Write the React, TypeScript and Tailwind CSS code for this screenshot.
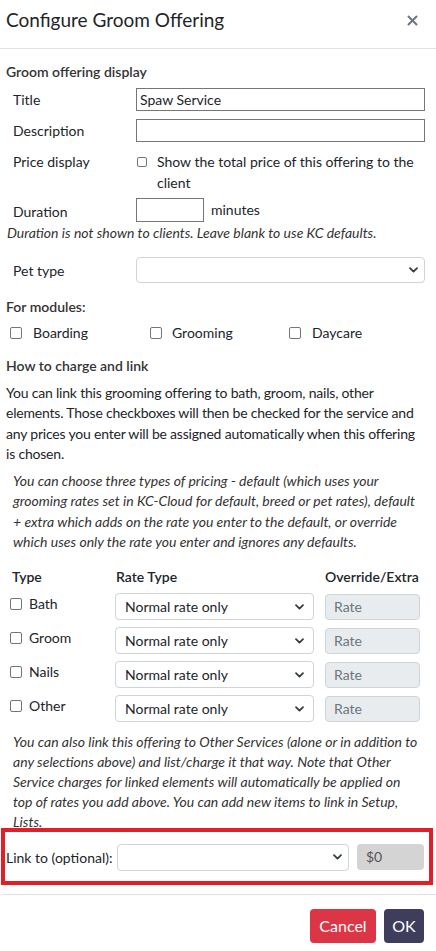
import React from "react";

function Chevron() {
  return (
    <svg width="9" height="6" viewBox="0 0 9 6" className="shrink-0">
      <path d="M1 1.2l3.5 3.5 3.5-3.5" fill="none" stroke="#343a40" strokeWidth="1.7" strokeLinecap="round" strokeLinejoin="round" />
    </svg>
  );
}

function Box({ className = "" }: { className?: string }) {
  return <span className={`inline-block shrink-0 rounded-[2px] border border-[#767676] bg-white ${className}`} />;
}

function FakeSelect({ value = "", className = "" }: { value?: string; className?: string }) {
  return (
    <div
      className={`flex items-center justify-between rounded-[4px] border border-[#ced4da] bg-white pl-[9px] pr-[6px] text-[#212529] ${className}`}
    >
      <span>{value}</span>
      <Chevron />
    </div>
  );
}

function RateRow({ label }: { label: string }) {
  return (
    <div className="flex h-[27px] items-center">
      <div className="flex w-[109px] items-center gap-[7px] self-start pl-[4px] pt-[1px] leading-[20px]">
        <Box className="h-[12px] w-[12px]" />
        <span>{label}</span>
      </div>
      <FakeSelect value="Normal rate only" className="h-[27px] w-[199px] pr-[9px]" />
      <div className="ml-[11px] flex h-[26px] w-[95px] items-center rounded-[4px] border border-[#ced4da] bg-[#e9ecef] pl-[8px] text-[#6c757d]">
        Rate
      </div>
    </div>
  );
}

export default function App() {
  return (
    <div className="min-h-[951px] w-[436px] bg-white font-['Lato','Liberation_Sans',sans-serif] text-[14px] leading-[20px] text-[#212529]">
      <header className="flex h-[49px] items-start justify-between border-b border-[#dee2e6] pl-[6px] pr-[18px] pt-[7px]">
        <h1 className="text-[19px] leading-[26px] text-[#212529]">Configure Groom Offering</h1>
        <svg width="11" height="11" viewBox="0 0 11 11" className="mt-[8px]">
          <path d="M1.5 1.5l8 8M9.5 1.5l-8 8" stroke="#6c757d" strokeWidth="2" strokeLinecap="round" />
        </svg>
      </header>

      <div className="pl-[6px] pr-[11px]">
        <h2 className="mt-[13px] font-semibold text-[#333]">Groom offering display</h2>

        <div className="mt-[6px] flex h-[23px] items-center">
          <span className="w-[130px] pl-[7px]">Title</span>
          <div className="flex h-[23px] flex-1 items-center border border-[#767676] pl-[3px]">Spaw Service</div>
        </div>

        <div className="mt-[8px] flex h-[23px] items-center">
          <span className="w-[130px] pl-[7px]">Description</span>
          <div className="h-[23px] flex-1 border border-[#767676]" />
        </div>

        <div className="mt-[9px] flex leading-[21px]">
          <span className="w-[130px] pl-[7px]">Price display</span>
          <div className="flex flex-1 items-start">
            <Box className="ml-[1px] mt-[6px] h-[10px] w-[10px]" />
            <span className="ml-[10px]">
              Show the total price of this offering to the
              <br />
              client
            </span>
          </div>
        </div>

        <div className="mt-[5px] flex h-[24px] items-center">
          <span className="w-[130px] pl-[7px] pt-[3px]">Duration</span>
          <div className="h-[24px] w-[68px] border border-[#767676]" />
          <span className="ml-[7px]">minutes</span>
        </div>

        <p className="mt-[1px] pl-[1px] italic text-[#333]">Duration is not shown to clients. Leave blank to use KC defaults.</p>

        <div className="mt-[14px] flex h-[26px] items-center">
          <span className="w-[130px] pl-[7px] pt-[2px]">Pet type</span>
          <FakeSelect className="h-[26px] flex-1" />
        </div>

        <h2 className="mt-[14px] font-semibold text-[#333]">For modules:</h2>
        <div className="mt-[6px] flex items-center">
          <div className="flex w-[144px] items-center gap-[11px] pl-[4px]">
            <Box className="h-[12px] w-[12px]" />
            <span>Boarding</span>
          </div>
          <div className="flex w-[139px] items-center gap-[10px]">
            <Box className="h-[12px] w-[12px]" />
            <span>Grooming</span>
          </div>
          <div className="flex items-center gap-[11px]">
            <Box className="h-[12px] w-[12px]" />
            <span>Daycare</span>
          </div>
        </div>

        <h2 className="mt-[13px] font-semibold text-[#333]">How to charge and link</h2>
        <p className="mt-[7px] whitespace-nowrap leading-[20.3px] tracking-[-0.2px]">
          You can link this grooming offering to bath, groom, nails, other
          <br />
          elements. Those checkboxes will then be checked for the service and
          <br />
          any prices you enter will be assigned automatically when this offering
          <br />
          is chosen.
        </p>
        <p className="mt-[7px] whitespace-nowrap pl-[7px] italic leading-[20.3px] text-[#333]">
          You can choose three types of pricing - default (which uses your
          <br />
          grooming rates set in KC-Cloud for default, breed or pet rates), default
          <br />
          + extra which adds on the rate you enter to the default, or override
          <br />
          which uses only the rate you enter and ignores any defaults.
        </p>

        <div className="mt-[15px] flex font-semibold">
          <span className="w-[110px] pl-[6px]">Type</span>
          <span className="w-[209px]">Rate Type</span>
          <span>Override/Extra</span>
        </div>
        <div className="mt-[6px] flex flex-col gap-[7px]">
          <RateRow label="Bath" />
          <RateRow label="Groom" />
          <RateRow label="Nails" />
          <RateRow label="Other" />
        </div>

        <p className="mt-[10px] whitespace-nowrap pl-[7px] italic text-[#333]">
          You can also link this offering to Other Services (alone or in addition to
          <br />
          any selections above) and list/charge it that way. Note that Other
          <br />
          Service charges for linked elements will automatically be applied on
          <br />
          top of rates you add above. You can add new items to link in Setup,
          <br />
          Lists.
        </p>
      </div>

      <div className="relative ml-[1px] mt-[-4px] flex h-[57px] w-[432px] items-center border-[4px] border-[#e41e26] pl-[1px] pt-[1px]">
        <span className="w-[111px] pt-[2px]">Link to (optional):</span>
        <FakeSelect className="h-[27px] w-[232px]" />
        <div className="ml-[8px] flex h-[26px] w-[67px] items-center rounded-[4px] bg-[#d4d4d4] pl-[9px] text-[#555]">$0</div>
      </div>

      <footer className="ml-[2px] mt-[9px] flex justify-end gap-[8px] border-t border-[#dee2e6] pr-[12px] pt-[14px]">
        <button type="button" className="h-[34px] w-[66px] rounded-[4px] bg-[#dc3545] text-[16px] text-white">
          Cancel
        </button>
        <button type="button" className="h-[34px] w-[40px] rounded-[4px] bg-[#3e3d5c] text-[16px] text-white">
          OK
        </button>
      </footer>
    </div>
  );
}
